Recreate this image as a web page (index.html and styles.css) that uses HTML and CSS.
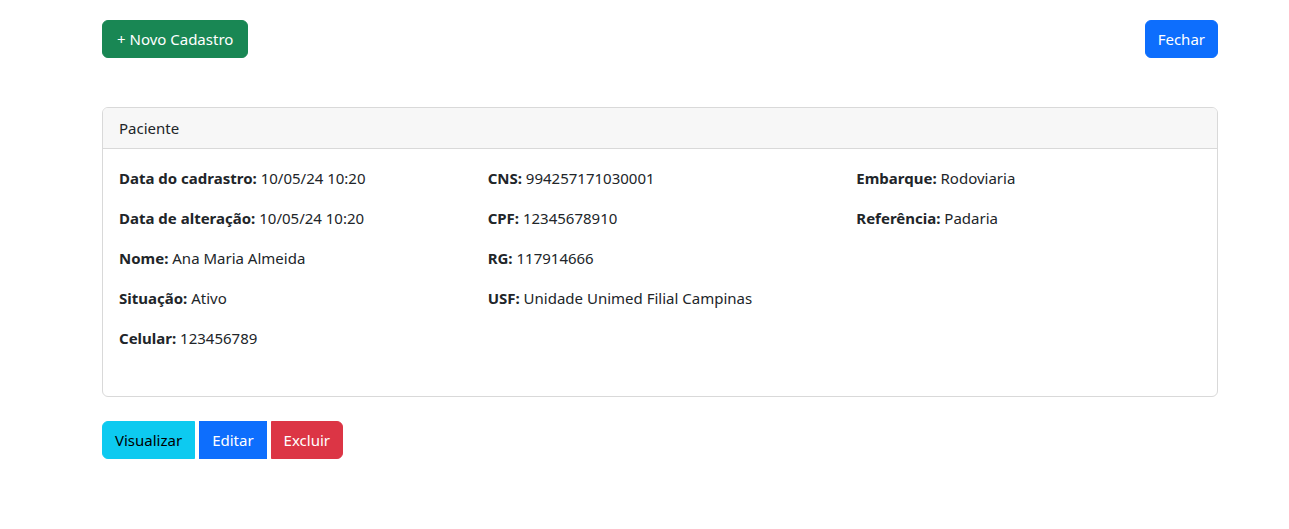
FILE: index.html
```html
<!DOCTYPE html>
<html lang="pt-BR">
<head>
<meta charset="utf-8">
<title>Paciente</title>
<link rel="stylesheet" href="styles.css">
</head>
<body>
<div class="page">
  <div class="topbar">
    <button class="btn btn-success wide">+ Novo Cadastro</button>
    <button class="btn btn-primary">Fechar</button>
  </div>

  <div class="card">
    <div class="card-header">Paciente</div>
    <div class="card-body">
      <div class="grid">
        <div class="col">
          <p><b>Data do cadrastro:</b> 10/05/24 10:20</p>
          <p><b>Data de alteração:</b> 10/05/24 10:20</p>
          <p><b>Nome:</b> Ana Maria Almeida</p>
          <p><b>Situação:</b> Ativo</p>
          <p><b>Celular:</b> 123456789</p>
        </div>
        <div class="col">
          <p><b>CNS:</b> 994257171030001</p>
          <p><b>CPF:</b> 12345678910</p>
          <p><b>RG:</b> 117914666</p>
          <p><b>USF:</b> Unidade Unimed Filial Campinas</p>
        </div>
        <div class="col">
          <p><b>Embarque:</b> Rodoviaria</p>
          <p><b>Referência:</b> Padaria</p>
        </div>
      </div>
    </div>
  </div>

  <div class="actions">
    <button class="btn btn-info first">Visualizar</button>
    <button class="btn btn-primary mid">Editar</button>
    <button class="btn btn-danger last">Excluir</button>
  </div>
</div>
</body>
</html>
```

FILE: styles.css
```css
* { box-sizing: border-box; }

body {
  margin: 0;
  font-family: "Noto Sans", "Open Sans", sans-serif;
  font-size: 15px;
  line-height: 24px;
  color: #212529;
  background: #fff;
}

.page {
  margin-left: 102px;
  width: 1116px;
  padding-top: 20px;
}

.topbar {
  display: flex;
  justify-content: space-between;
}

.btn {
  font-family: inherit;
  font-size: 15px;
  line-height: 24px;
  height: 38px;
  padding: 6px 12px;
  border: 1px solid transparent;
  border-radius: 6px;
  color: #fff;
  cursor: pointer;
}

.btn.wide { padding: 6px 14px; }

.btn-success { background: #198754; border-color: #198754; }
.btn-primary { background: #0d6efd; border-color: #0d6efd; }
.btn-info { background: #0dcaf0; border-color: #0dcaf0; color: #000; }
.btn-danger { background: #dc3545; border-color: #dc3545; }

.card {
  margin-top: 49px;
  border: 1px solid #d9d9d9;
  border-radius: 6px;
  overflow: hidden;
}

.card-header {
  background: #f7f7f7;
  border-bottom: 1px solid #d9d9d9;
  padding: 8px 16px;
}

.card-body {
  padding: 17px 16px 30px;
}

.grid {
  display: grid;
  grid-template-columns: repeat(3, 1fr);
  column-gap: 24px;
}

.col p {
  margin: 0 0 16px;
  white-space: nowrap;
}

.col b { font-weight: 700; }

.actions {
  margin-top: 24px;
  display: flex;
  gap: 4px;
}

.actions .first { border-radius: 6px 0 0 6px; }
.actions .mid { border-radius: 0; }
.actions .last { border-radius: 0 6px 6px 0; }
```
